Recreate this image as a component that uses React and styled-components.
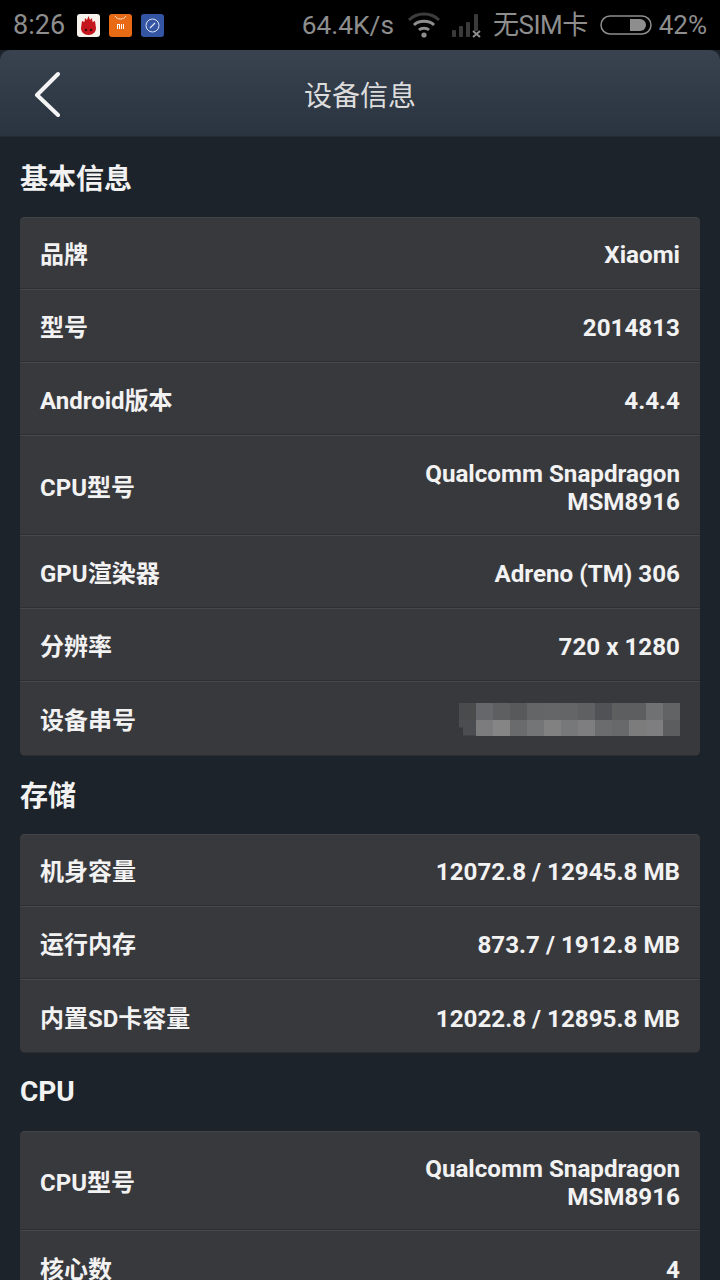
import styled, { createGlobalStyle } from 'styled-components';

const GlobalStyle = createGlobalStyle`
  html, body {
    margin: 0;
    height: 1280px;
    overflow: hidden;
    background: #1c232a;
  }

  body {
    font-family: Roboto, "Noto Sans CJK SC", sans-serif;
  }
`;

const Page = styled.div`
  width: 720px;
  height: 1280px;
  overflow: hidden;
  background: #1c232a;
`;

const StatusBar = styled.div`
  height: 50px;
  background: #000;
  display: flex;
  align-items: center;
  padding: 0 13px;
  box-sizing: border-box;
  color: #8e8e8e;
  font-size: 26px;
  line-height: 50px;
`;

const Clock = styled.span`
  font-size: 27px;
`;

const AppIcons = styled.div`
  display: flex;
  gap: 9px;
  margin-left: 12px;
`;

const StatusRight = styled.div`
  margin-left: auto;
  display: flex;
  align-items: center;
`;

const Speed = styled.span`
  margin-right: 14px;
  font-size: 26.3px;
`;

const Spacer = styled.span`
  width: 12px;
`;

const Sim = styled.span`
  margin: 0 12px 0 11px;
  letter-spacing: -0.5px;
`;

const Percent = styled.span`
  margin-left: 7px;
`;

const Header = styled.div`
  height: 87px;
  padding-top: 2px;
  border-radius: 10px 10px 0 0;
  background: linear-gradient(#39424f, #2a3340);
  border-bottom: 1px solid #232a33;
  box-sizing: border-box;
  position: relative;
  display: flex;
  align-items: center;
  justify-content: center;
  color: #dcdcdc;
  font-size: 28px;
`;

const BackIcon = styled.svg`
  position: absolute;
  left: 30px;
  top: 19px;
`;

const Content = styled.div`
  padding-top: 2px;
`;

const SectionTitle = styled.div`
  height: 78px;
  padding: 0 0 2px 20px;
  box-sizing: border-box;
  display: flex;
  align-items: center;
  color: #f2f2f2;
  font-size: 28px;
  font-weight: 700;
`;

const Card = styled.div`
  margin: 0 20px;
  background: #38393d;
  border-radius: 5px;
  overflow: hidden;
  box-shadow: inset 0 1px 0 #434448;
`;

const rowHeight = ({ $tall, $blurred }) => {
  if ($tall) return 100;
  return $blurred ? 74 : 73;
};

const Row = styled.div`
  height: ${rowHeight}px;
  box-sizing: border-box;
  padding: 0 20px;
  display: flex;
  align-items: center;
  justify-content: space-between;
  color: #f2f2f2;
  font-size: 24px;
  font-weight: 700;
  border-bottom: 1px solid #47484c;
  box-shadow: inset 0 -1px 0 #2e2f33;

  &:last-child {
    border-bottom: 0;
    box-shadow: inset 0 -1px 0 #2c2d31;
  }
`;

const Label = styled.span`
  margin-top: -1px;
`;

const Value = styled.div`
  text-align: right;
  font-size: 24.2px;
  line-height: 28px;
  padding-top: 4px;
`;

const Blur = styled.div`
  display: grid;
  grid-template-columns: repeat(13, 17px);
  grid-template-rows: 17px 16px;
`;

const BlurCell = styled.div`
  background: ${({ $shade }) => $shade};

  &:nth-child(14) {
    clip-path: polygon(0 0, 100% 0, 100% 100%, 4px 100%, 4px 8px, 0 8px);
  }
`;

const blurShades = [
  '#4a4b4d', '#66676a', '#5e5f61', '#58595b', '#646567', '#656668', '#646567',
  '#5f6062', '#515255', '#5d5e60', '#5d5e60', '#707173', '#626365',
  '#4c4d50', '#7c7c7e', '#858586', '#6a6b6d', '#747577', '#818182', '#777879',
  '#7e7e80', '#6b6c6e', '#68696b', '#7c7c7d', '#7e7e80', '#5c5d5f',
];

const sections = [
  {
    title: '基本信息',
    rows: [
      { label: '品牌', value: 'Xiaomi' },
      { label: '型号', value: '2014813' },
      { label: 'Android版本', value: '4.4.4' },
      { label: 'CPU型号', value: ['Qualcomm Snapdragon', 'MSM8916'] },
      { label: 'GPU渲染器', value: 'Adreno (TM) 306' },
      { label: '分辨率', value: '720 x 1280' },
      { label: '设备串号', blurred: true },
    ],
  },
  {
    title: '存储',
    rows: [
      { label: '机身容量', value: '12072.8 / 12945.8 MB' },
      { label: '运行内存', value: '873.7 / 1912.8 MB' },
      { label: '内置SD卡容量', value: '12022.8 / 12895.8 MB' },
    ],
  },
  {
    title: 'CPU',
    rows: [
      { label: 'CPU型号', value: ['Qualcomm Snapdragon', 'MSM8916'] },
      { label: '核心数', value: '4' },
    ],
  },
];

const AntutuIcon = () => (
  <svg width="23" height="23" viewBox="0 0 23 23">
    <rect width="23" height="23" rx="3" fill="#f7f3ec" />
    <path
      d="M11.5 2 L13 6 L15 4 L15.5 8 L18 7 L19 14 C19 18 16 21 11.5 21 C7 21 4 18 4 14 L5 7 L7.5 8 L8 4 L10 6 Z"
      fill="#c4161c"
    />
    <circle cx="9" cy="16" r="1.2" fill="#3a0a0a" />
    <circle cx="14" cy="16" r="1.2" fill="#3a0a0a" />
  </svg>
);

const MiStoreIcon = () => (
  <svg width="23" height="23" viewBox="0 0 23 23">
    <rect width="23" height="23" rx="3" fill="#e96a14" />
    <path d="M6 2 C8 6 15 6 17 2" fill="none" stroke="#fbe3cf" strokeWidth="1" />
    <path d="M8 10 h3 v5 h-1 v-4 h-1 v4 h-1 Z M12 10 h1 v5 h-1 Z M14 10 h1 v5 h-1 Z" fill="#fff" />
  </svg>
);

const GaugeIcon = () => (
  <svg width="23" height="23" viewBox="0 0 23 23">
    <rect width="23" height="23" rx="3" fill="#3455a4" />
    <circle cx="11.5" cy="11.5" r="6.5" fill="none" stroke="#dfe6f5" strokeWidth="1" />
    <path d="M9 14 L14 9" stroke="#dfe6f5" strokeWidth="1.2" />
  </svg>
);

const WifiIcon = () => (
  <svg width="32" height="26" viewBox="0 0 32 26" fill="none">
    <path d="M1 8 C9 0 23 0 31 8" stroke="#3c3c3c" strokeWidth="3" />
    <path d="M6 13 C11 8 21 8 26 13" stroke="#8e8e8e" strokeWidth="3" />
    <path d="M11 18 C13.5 15.5 18.5 15.5 21 18" stroke="#8e8e8e" strokeWidth="3" />
    <circle cx="16" cy="23" r="2.6" fill="#8e8e8e" />
  </svg>
);

const SignalIcon = () => (
  <svg width="30" height="26" viewBox="0 0 30 26">
    <rect x="0" y="18" width="4" height="7" rx="1" fill="#3a3a3a" />
    <rect x="7" y="14" width="4" height="11" rx="1" fill="#3a3a3a" />
    <rect x="14" y="10" width="4" height="15" rx="1" fill="#3a3a3a" />
    <rect x="22" y="2" width="4" height="17" rx="1" fill="#3a3a3a" />
    <path d="M21 19 L28 25 M28 19 L21 25" stroke="#8e8e8e" strokeWidth="2" />
  </svg>
);

const BatteryIcon = () => (
  <svg width="52" height="20" viewBox="0 0 52 20">
    <rect x="1" y="1" width="50" height="18" rx="9" fill="none" stroke="#8e8e8e" strokeWidth="1.5" />
    <path d="M30 4 H40 A6 6 0 0 1 40 16 H30 Z" fill="#8e8e8e" />
  </svg>
);

const App = () => (
  <Page>
    <GlobalStyle />
    <StatusBar>
      <Clock>8:26</Clock>
      <AppIcons>
        <AntutuIcon />
        <MiStoreIcon />
        <GaugeIcon />
      </AppIcons>
      <StatusRight>
        <Speed>64.4K/s</Speed>
        <WifiIcon />
        <Spacer />
        <SignalIcon />
        <Sim>无SIM卡</Sim>
        <BatteryIcon />
        <Percent>42%</Percent>
      </StatusRight>
    </StatusBar>
    <Header>
      <BackIcon width="34" height="48" viewBox="0 0 34 48">
        <path
          d="M28 5 L7 26 L28 46"
          fill="none"
          stroke="#f4f4f4"
          strokeWidth="4"
          strokeLinecap="round"
          strokeLinejoin="round"
        />
      </BackIcon>
      设备信息
    </Header>
    <Content>
      {sections.map(section => (
        <section key={section.title}>
          <SectionTitle>{section.title}</SectionTitle>
          <Card>
            {section.rows.map(row => (
              <Row key={row.label} $tall={Array.isArray(row.value)} $blurred={row.blurred}>
                <Label>{row.label}</Label>
                {row.blurred ? (
                  <Blur>
                    {blurShades.map((shade, i) => (
                      <BlurCell key={i} $shade={shade} />
                    ))}
                  </Blur>
                ) : (
                  <Value>
                    {[row.value].flat().map(line => (
                      <div key={line}>{line}</div>
                    ))}
                  </Value>
                )}
              </Row>
            ))}
          </Card>
        </section>
      ))}
    </Content>
  </Page>
);

export default App;
